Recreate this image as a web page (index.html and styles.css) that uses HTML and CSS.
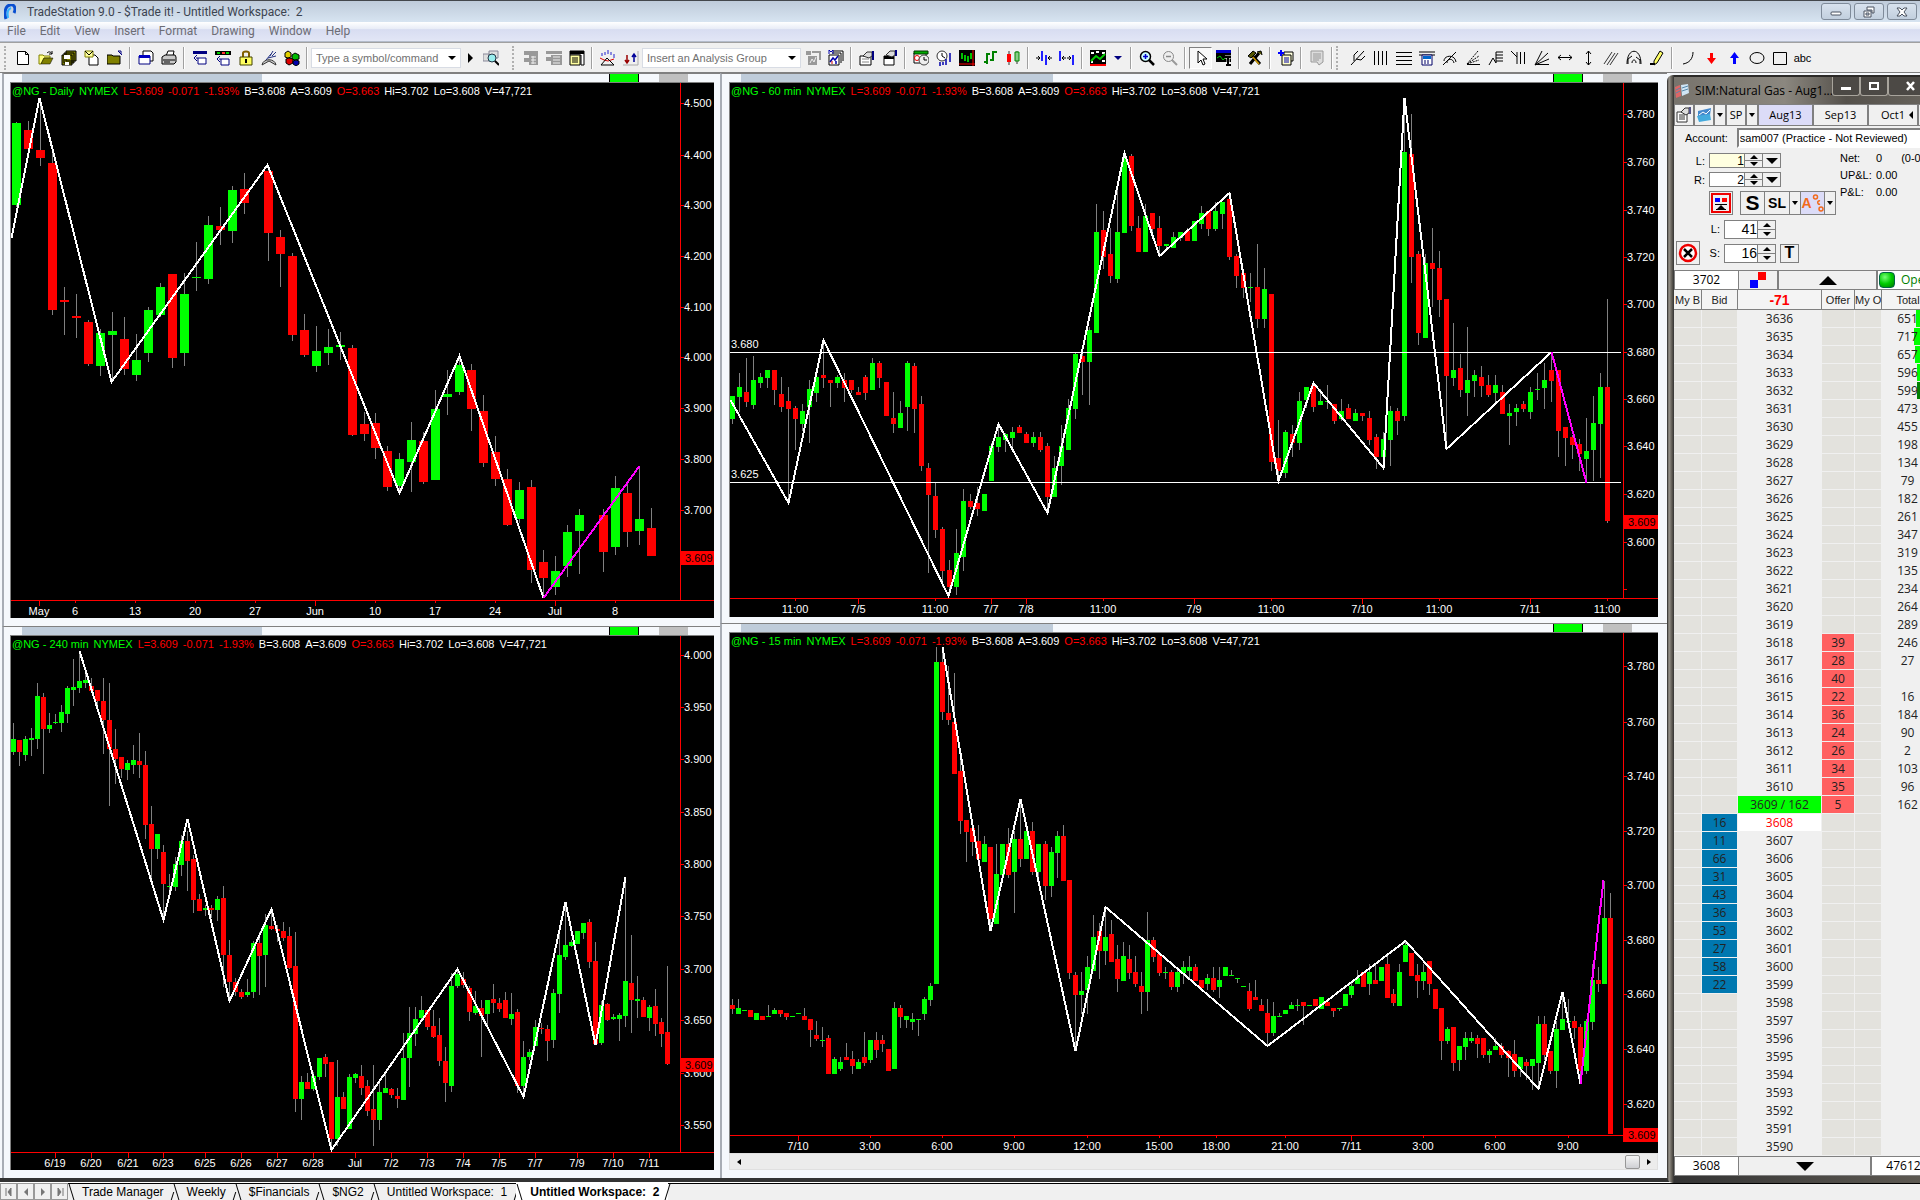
FILE: index.html
```html
<!DOCTYPE html>
<html lang="en">
<head>
    <meta charset="UTF-8">
    <meta name="viewport" content="width=device-width, initial-scale=1.0">
    <title>TradeStation 9.0 - $Trade it! - Untitled Workspace: 2</title>
    <link rel="stylesheet" href="styles.css">
</head>
<body>
    <header class="titlebar">
        <svg class="logo" viewBox="0 0 12 16"><path d="M2 15C0 9 1 2 6 1c5-1 6 4 4 8" fill="none" stroke="#0a4fd0" stroke-width="3"/><path d="M4 14C3 9 4 5 7 4" fill="none" stroke="#35b4ff" stroke-width="2"/></svg>
        <h1>TradeStation 9.0 - $Trade it! - Untitled Workspace: &nbsp;2</h1>
        <div class="window-buttons">
            <button aria-label="Minimize"><svg viewBox="0 0 12 12"><rect x="1" y="6" width="10" height="3" rx="1"/></svg></button>
            <button aria-label="Restore"><svg viewBox="0 0 12 12"><path d="M4 1h7v6H9V4H4zM1 5h7v6H1zM3 7v2h3V7z"/></svg></button>
            <button aria-label="Close"><svg viewBox="0 0 12 12"><path d="M1 2h3l2 2 2-2h3L8 6l3 4H8L6 8l-2 2H1l3-4z"/></svg></button>
        </div>
    </header>

    <nav class="menu">
        <a href="#">File</a>
        <a href="#">Edit</a>
        <a href="#">View</a>
        <a href="#">Insert</a>
        <a href="#">Format</a>
        <a href="#">Drawing</a>
        <a href="#">Window</a>
        <a href="#">Help</a>
    </nav>

    <div class="toolbar">
        <span class="grip"></span>
        <button title="New"><svg viewBox="0 0 16 16"><path d="M2.500 1.500h8l3 3v10h-11zM10.500 1.500v3h3" fill="#fff" stroke="#000"/></svg></button>
        <button title="Open"><svg viewBox="0 0 16 16"><path d="M1 14V5h4l1 1h6v2H6l-3 6z" fill="#ffff80" stroke="#808000"/><path d="M3 14l3-6h9l-3 6z" fill="#808000" stroke="#000" stroke-width=".5"/><path d="M9 3c2-2 4-1 5 1M14 1v3h-3" fill="none" stroke="#000"/></svg></button>
        <button title="Save all"><svg viewBox="0 0 16 16"><path d="M5 1h10v10H5zM3 3h10v10H3zM1 5h10v10H1z" fill="#808000" stroke="#000"/><path d="M3 5h6v4H3zM4 12h4v3H4z" fill="#fff"/></svg></button>
        <button title="Send"><svg viewBox="0 0 16 16"><path d="M5 5h6l3 3v7H5z" fill="#fff" stroke="#000"/><path d="M1 1h8v6H1z" fill="#ffffa0" stroke="#808000"/><path d="M1 1l4 4 4-4" fill="none" stroke="#000"/></svg></button>
        <button title="Close workspace"><svg viewBox="0 0 16 16"><path d="M0 14V5h5l1 1h7v8z" fill="#808000" stroke="#000"/><path d="M11 1h3v3M11 1l4 4" fill="none" stroke="#000080"/></svg></button>
        <span class="sep"></span>
        <button title="Preview"><svg viewBox="0 0 16 16"><path d="M5 1h8l2 2v8H5z" fill="#fff" stroke="#000"/><path d="M1 6h11v8H1z" fill="#fff" stroke="#000080"/><path d="M1 5h11v3H1z" fill="#0000c0"/></svg></button>
        <button title="Print"><svg viewBox="0 0 16 16"><path d="M5 6l2-5h6l-1 5z" fill="#fff" stroke="#000"/><path d="M1 7l3-2h10l1 2v5l-2 2H1z" fill="#c8c8c8" stroke="#000"/><path d="M2 10h12M3 12h6" stroke="#000"/></svg></button>
        <span class="sep"></span>
        <button title="Data window"><svg viewBox="0 0 16 16"><path d="M1 1h14v3H1z" fill="#000080"/><path d="M4 8h10v6H6V8" fill="#fff" stroke="#000080"/><path d="M5 5L2 8l3 3" fill="none" stroke="#000080"/></svg></button>
        <button title="Status"><svg viewBox="0 0 16 16"><path d="M0 1h16v4H0z" fill="#000"/><path d="M2 2h3v2H2z" fill="#0c0"/><path d="M7 2h3v2H7z" fill="#f33"/><path d="M11 2h3v2h-3z" fill="#0c0"/><path d="M4 9h10v6H6V9" fill="#fff" stroke="#000080"/><path d="M5 6L2 9l3 3" fill="none" stroke="#000080"/></svg></button>
        <button title="Lock"><svg viewBox="0 0 16 16"><path d="M5 7V3c0-2 6-2 6 0v4" fill="none" stroke="#806000" stroke-width="2"/><path d="M2 7h12v8H2z" fill="#ffff60" stroke="#404000"/><path d="M7 9h2v4H7z"/></svg></button>
        <button title="Satellite"><svg viewBox="0 0 16 16"><path d="M1 15c1-7 13-7 14 0l-7-4z" fill="#ccc" stroke="#333"/><path d="M5 10l5-6M9 6l3-5M11 6l4-4M7 8l8-2" fill="none" stroke="#203080"/></svg></button>
        <button title="Blocks"><svg viewBox="0 0 16 16"><path d="M1 3l3-2 3 2v4L4 8 1 7z" fill="#e0d000" stroke="#000"/><path d="M8 5l3-2 4 2v4l-4 1-3-1z" fill="#0b0" stroke="#000"/><path d="M2 9l3-1 4 1v4l-4 2-3-2z" fill="#d00" stroke="#000"/><path d="M9 11l3-1 3 1v3l-3 2-3-2z" fill="#00a" stroke="#000"/></svg></button>
        <span class="sep"></span>
        <div class="combo">
            <input type="text" placeholder="Type a symbol/command" aria-label="Symbol or command">
            <button aria-label="History"><i class="caret"></i></button>
        </div>
        <button class="go" title="Go"><svg viewBox="0 0 8 16"><path d="M2 3l5 5-5 5z"/></svg></button>
        <button title="Symbol lookup"><svg viewBox="0 0 16 16"><path d="M0 4h6v7H0zM6 1h9v7H6z" fill="#ddd" stroke="#889"/><circle cx="9" cy="8" r="4" fill="#9ee" stroke="#234"/><path d="M12 11l4 4" stroke="#000" stroke-width="2"/></svg></button>
        <span class="grip wide"></span>
        <button title="Price"><svg viewBox="0 0 16 16"><path d="M1 1h14v4H1zM6 5h9v10H6zM1 8h5v4H1z" fill="#999"/><path d="M8 7h5M8 10h5M8 13h5M10 6v8" stroke="#eee"/></svg></button>
        <button title="Quote"><svg viewBox="0 0 16 16"><path d="M0 1h16v3H0zM5 5h11v10H5zM0 7h5v4H0z" fill="#999"/><path d="M7 7h7M7 10h7M7 13h7" stroke="#eee"/></svg></button>
        <button title="Table"><svg viewBox="0 0 16 16"><path d="M1 1h14v14h-3V5H1z" fill="#fff" stroke="#000"/><path d="M1 1h14v3H1z"/><path d="M1 5h10v10H1z" fill="#ffffa0" stroke="#000"/><path d="M3 8h6M3 10h6M3 12h6" stroke="#000"/></svg></button>
        <span class="sep"></span>
        <button title="Indicator"><svg viewBox="0 0 16 16"><path d="M2 6V3M5 5V2M8 4V0M11 5V2M14 8V4" stroke="#22c" fill="none"/><path d="M0 8l4 2 4 1 6-2" stroke="#d00" fill="none"/><path d="M1 15l6-7 7 7z" fill="none" stroke="#000"/></svg></button>
        <button title="Strategy"><svg viewBox="0 0 16 16"><path d="M0 15h15M15 1v14" stroke="#aaa"/><path d="M4 5v7M2 10l2 3 2-3" fill="none" stroke="#900" stroke-width="1.500"/><path d="M11 12V5M9 7l2-3 2 3" fill="none" stroke="#009" stroke-width="1.500"/></svg></button>
        <div class="combo group">
            <input type="text" placeholder="Insert an Analysis Group" aria-label="Analysis group">
            <button aria-label="Groups"><i class="caret"></i></button>
        </div>
        <button title="Save group"><svg viewBox="0 0 16 16"><path d="M1 1h5v4H1zM7 1h9v9h-2V3H7zM3 6h9v9H3z" fill="#999"/><path d="M5 13l2-4 2 3 2-5" fill="none" stroke="#eee"/></svg></button>
        <button title="Manage groups"><svg viewBox="0 0 16 16"><path d="M5 1h10v10M4 3h9v10" fill="#fff" stroke="#000"/><path d="M1 5h10v10H1z" fill="#fff" stroke="#000"/><path d="M2 12l3-4 2 2 3-4M8 14v-3" fill="none" stroke="#00a" stroke-width="1.500"/><path d="M1 4V0l2 2 2-2v4" fill="none" stroke="#00a"/><path d="M4 14v-3" stroke="#c00"/></svg></button>
        <span class="sep"></span>
        <button title="Format symbol"><svg viewBox="0 0 16 16"><path d="M1 6h11v9H1z" fill="#fff" stroke="#000"/><path d="M3 9h7M3 12h7" stroke="#888"/><path d="M4 6l4-4h5v4l-3 2z" fill="#ddd" stroke="#333"/><path d="M13 1h2v9h-2z" fill="#000080"/></svg></button>
        <button title="Format window"><svg viewBox="0 0 16 16"><path d="M2 6h10v9H2z" fill="#fff" stroke="#000"/><path d="M2 6h10v3H2z"/><path d="M4 5l4-4h5v4l-3 2z" fill="#ddd" stroke="#333"/><path d="M13 0h2v6h-2z" fill="#000080"/></svg></button>
        <span class="sep"></span>
        <button title="Sessions"><svg viewBox="0 0 16 16"><path d="M1 3h12v10H1z" fill="#fff" stroke="#000"/><path d="M1 1h14v3H1z" fill="#0a0" stroke="#030"/><circle cx="4" cy="8" r="2.500" fill="none" stroke="#e00"/><circle cx="11" cy="10" r="5" fill="#eee" stroke="#444"/><path d="M11 7v3h3" fill="none" stroke="#000"/></svg></button>
        <button title="Interval"><svg viewBox="0 0 16 16"><circle cx="6" cy="6" r="5" fill="#fff" stroke="#333"/><path d="M6 3v3l3 2" fill="none" stroke="#000"/><path d="M4 12v4M7 12v3M10 9v6M14 3v9" stroke="#00a" stroke-width="1.500"/></svg></button>
        <button title="Chart style"><svg viewBox="0 0 16 16"><path d="M0 0h16v16H0z"/><path d="M3 3v6M6 5v6M9 6v6M12 3v6" stroke="#0f0" stroke-width="1.500"/><path d="M0 14h16M14 0v16" stroke="#f00"/></svg></button>
        <button title="OHLC bars"><svg viewBox="0 0 16 16"><path d="M5 3v11M2 12h3M5 4h3M11 1v10M8 10h3M11 2h4" stroke="#008000" stroke-width="2"/></svg></button>
        <button title="Candlesticks"><svg viewBox="0 0 16 16"><path d="M4 1v14M12 1v13" stroke="#333"/><path d="M2 4h4v8H2z" fill="#f00"/><path d="M10 2h4v9h-4z" fill="#8c8" stroke="#080"/></svg></button>
        <span class="sep"></span>
        <button title="Less spacing"><svg viewBox="0 0 16 16"><path d="M6 1v10M10 5v10" stroke="#22f" stroke-width="2"/><path d="M0 8h4M2 6l2 2-2 2M16 8h-4M14 6l-2 2 2 2" fill="none" stroke="#000"/></svg></button>
        <button title="More spacing"><svg viewBox="0 0 16 16"><path d="M1 1v10M14 5v10" stroke="#22f" stroke-width="2"/><path d="M3 8h4M5 6L3 8l2 2M12 8H8M10 6l2 2-2 2" fill="none" stroke="#000"/></svg></button>
        <span class="sep"></span>
        <button title="Chart colors"><svg viewBox="0 0 16 16"><path d="M0 0h16v16H0z"/><path d="M1 2h3v2H1zM6 1h3v2H6zM12 2h3v2h-3zM1 11h2v2H1zM12 10h3v2h-3z" fill="#fff"/><path d="M1 11l5-5 4 3 5-5" fill="none" stroke="#0c0" stroke-width="2"/><path d="M0 14h16v2H0z" fill="#f00"/></svg></button>
        <button class="go" title="More colors"><i class="caret blue"></i></button>
        <span class="sep"></span>
        <button title="Zoom in"><svg viewBox="0 0 16 16"><circle cx="6.500" cy="6.500" r="5" fill="#cff" stroke="#000" stroke-width="1.500"/><path d="M4 6.500h5M6.500 4v5" stroke="#00c" stroke-width="1.500"/><path d="M10 10l5 5" stroke="#000" stroke-width="2.500"/></svg></button>
        <button title="Zoom out"><svg viewBox="0 0 16 16"><circle cx="6.500" cy="6.500" r="5" fill="#eee" stroke="#888"/><path d="M4 6.500h5" stroke="#888" stroke-width="1.500"/><path d="M10 10l5 5" stroke="#999" stroke-width="2"/></svg></button>
        <span class="sep"></span>
        <button class="pressed" title="Pointer"><svg viewBox="0 0 16 16"><path d="M5 1v12l3-3 2 5 2-1-2-5h4z" fill="#fff" stroke="#000"/></svg></button>
        <button title="Text"><svg viewBox="0 0 16 16"><path d="M0 1h15v11H0z"/><path d="M0 0h15v3H0z" fill="#00c"/><path d="M1 8l3-2 3 4 2-2" fill="none" stroke="#0c0"/><path d="M9 7h6M12 7v8M10 15h5" stroke="#fff" stroke-width="3"/><path d="M9 7h6M12 7v8M10 15h5" stroke="#000" stroke-width="2"/></svg></button>
        <span class="sep"></span>
        <button title="Tools"><svg viewBox="0 0 16 16"><path d="M3 14l9-11M4 4l9 10" stroke="#000" stroke-width="3"/><path d="M4 5l8 9" stroke="#c90" stroke-width="1.500"/><path d="M1 6l5-5 3 2-5 5zM10 2l4-1 1 4" fill="#550" stroke="#000"/></svg></button>
        <span class="sep"></span>
        <button title="Add panel"><svg viewBox="0 0 16 16"><path d="M6 2h9v9H6z" fill="#ffd" stroke="#000"/><path d="M4 5h9v10H4z" fill="#ffc" stroke="#000"/><path d="M6 8h5M6 10h5M6 12h5" stroke="#00a"/><path d="M0 3h6M3 0v6" stroke="#00f" stroke-width="2"/></svg></button>
        <span class="sep"></span>
        <button title="Notes"><svg viewBox="0 0 16 16"><path d="M2 1h12v11l-4 3-2-3H2z" fill="#ddd" stroke="#999"/><path d="M4 4h8M4 6h8M4 8h8M4 10h6" stroke="#999"/></svg></button>
        <span class="sep"></span>
        <span class="grip"></span>
        <div class="drawing-tools">
            <button title="Andrews pitchfork"><svg viewBox="0 0 16 16"><path d="M1 15L14 1M4 11V5l4-4M6 9l5 1 4-4" fill="none" stroke="#000"/></svg></button>
            <button title="Time lines"><svg viewBox="0 0 16 16"><path d="M1.500 1v14M5.500 1v14M9.500 1v14M13.500 1v14" stroke="#000"/></svg></button>
            <button title="Price lines"><svg viewBox="0 0 16 16"><path d="M0 2.500h16M0 6.500h16M0 10.500h16M0 14.500h16" stroke="#000"/></svg></button>
            <button title="Calculator"><svg viewBox="0 0 16 16"><path d="M0 2h16M0 5h16" stroke="#000"/><path d="M3 5h10v10H3z" fill="#fff" stroke="#006"/><path d="M4 6h8v3H4z" fill="#06c"/><path d="M5 11h6M5 13h6" stroke="#006" stroke-dasharray="2 1"/></svg></button>
            <button title="Speed arcs"><svg viewBox="0 0 16 16"><path d="M1 15L14 2M2 11c0-6 11-7 12 1M5 13c0-5 6-5 7 0" fill="none" stroke="#000"/></svg></button>
            <button title="Speed lines"><svg viewBox="0 0 16 16"><path d="M2 14L13 1M2 14l12-8M2 14l12-4" fill="none" stroke="#000" stroke-dasharray="2 1"/><path d="M2 14.500h13" stroke="#000"/></svg></button>
            <button title="Retracement"><svg viewBox="0 0 16 16"><path d="M1 15l4-7 3 5V2h7M8 5h7M8 8h7M8 11h7" fill="none" stroke="#000"/></svg></button>
            <button title="Time extension"><svg viewBox="0 0 16 16"><path d="M0 1l6 6M6 2v12M9.500 2v12M13.500 2v12" fill="none" stroke="#000"/></svg></button>
            <button title="Gann fan"><svg viewBox="0 0 16 16"><path d="M1 15L8 1M1 15L14 3M1 15l14-6M1 14.500h14" fill="none" stroke="#000"/></svg></button>
            <button title="Horizontal line"><svg viewBox="0 0 16 16"><path d="M1 7.500h14M4 5L1 7.500 4 10M12 5l3 2.500L12 10" fill="none" stroke="#000"/></svg></button>
            <button title="Vertical line"><svg viewBox="0 0 16 16"><path d="M8.500 1v14M6 4l2.500-3L11 4M6 12l2.500 3L11 12" fill="none" stroke="#000"/></svg></button>
            <button title="Parallel lines"><svg viewBox="0 0 16 16"><path d="M1 14L9 2M4 15l8-12M7 15l8-12" stroke="#333"/></svg></button>
            <button title="Cycles"><svg viewBox="0 0 16 16"><path d="M1 14c0-17 14-17 14 0M2 14V9l4-3M6 13c0-4 4-4 4 0M10 7l4 3v4" fill="none" stroke="#000"/></svg></button>
            <button title="Pencil"><svg viewBox="0 0 16 16"><path d="M5 11L11 1l3 2-6 10-3 2z" fill="#ff6" stroke="#000"/><path d="M1 14h5" stroke="#000" stroke-width="2"/></svg></button>
            <span class="sep"></span>
            <button title="Arc"><svg viewBox="0 0 16 16"><path d="M13 2c0 7-4 11-10 12" fill="none" stroke="#000"/></svg></button>
            <button title="Down arrow"><svg viewBox="0 0 16 16"><path d="M7 3h3v5h3l-4.500 6L4 8h3z" fill="#f00"/></svg></button>
            <button title="Up arrow"><svg viewBox="0 0 16 16"><path d="M7 14h3V8h3L8.500 2 4 8h3z" fill="#00f"/></svg></button>
            <button title="Ellipse"><svg viewBox="0 0 16 16"><ellipse cx="8" cy="8" rx="7" ry="5.500" fill="none" stroke="#000"/></svg></button>
            <button title="Rectangle"><svg viewBox="0 0 16 16"><path d="M1.500 2.500h13v12h-13z" fill="none" stroke="#000"/></svg></button>
            <button title="Text label">abc</button>
        </div>
    </div>

    <main class="workspace">
        <div class="column left">
            <section class="chart-window">
                <div class="strip"><i class="band"></i><i class="up"></i><i class="idle"></i></div>
                <div class="chart" id="chart-daily"></div>
            </section>
            <section class="chart-window">
                <div class="strip"><i class="band"></i><i class="up"></i><i class="idle"></i></div>
                <div class="chart" id="chart-240"></div>
            </section>
        </div>
        <div class="column right">
            <section class="chart-window">
                <div class="strip"><i class="band"></i><i class="up"></i><i class="idle"></i></div>
                <div class="chart" id="chart-60"></div>
            </section>
            <section class="chart-window scrolls">
                <div class="strip"><i class="band"></i><i class="up"></i><i class="idle"></i></div>
                <div class="chart" id="chart-15"></div>
                <div class="scrollbar">
                    <button aria-label="Scroll left"><svg viewBox="0 0 8 8"><path d="M6 1v6L2 4z"/></svg></button>
                    <span class="thumb"></span>
                    <button aria-label="Scroll right"><svg viewBox="0 0 8 8"><path d="M2 1v6l4-3z"/></svg></button>
                </div>
            </section>
        </div>

        <aside class="matrix">
            <div class="matrix-title">
                <svg viewBox="0 0 16 16"><path d="M1 4l5-2 1 11-5 2z" fill="#d66"/><path d="M7 2l7-1 1 9-7 3z" fill="#cfe4f4"/><path d="M8 5l6-2M8 8l6-2M2 7l4-2M2 10l4-2" stroke="#58a"/></svg>
                <h2>SIM:Natural Gas - Aug1...</h2>
                <div class="matrix-buttons">
                    <button aria-label="Minimize"><svg viewBox="0 0 12 12"><path d="M1 7h10v3H1z" fill="#fff"/></svg></button>
                    <button aria-label="Maximize"><svg viewBox="0 0 12 12"><path d="M2 3h8v6H2z" fill="none" stroke="#fff" stroke-width="2"/></svg></button>
                    <button class="close" aria-label="Close"><svg viewBox="0 0 12 12"><path d="M2 2l7 8M9 2l-7 8" stroke="#fff" stroke-width="2.500"/></svg></button>
                </div>
            </div>

            <div class="matrix-body">
                <div class="contracts">
                    <button class="icon" aria-label="Properties"><svg viewBox="0 0 16 16"><path d="M1 5h10v10H1z" fill="#fff" stroke="#333"/><path d="M3 8h6M3 10h6M3 12h6" stroke="#333"/><path d="M5 5l4-4h4v5l-3 2z" fill="#ddd" stroke="#333"/><path d="M13 0h2v7h-2z" fill="#558"/></svg></button>
                    <button class="icon" aria-label="Symbol"><svg viewBox="0 0 16 16"><path d="M2 4l13-3-1 7-12 2z" fill="#48c"/><path d="M1 9l13-2 1 6-12 2z" fill="#4ad"/><path d="M3 8l4-3 3 2 4-4" fill="none" stroke="#fff"/></svg></button>
                    <button class="drop" aria-label="Symbol list"><i class="caret"></i></button>
                    <button class="sp">SP</button>
                    <button class="drop" aria-label="Spread list"><i class="caret"></i></button>
                    <button class="month active">Aug13</button>
                    <button class="month">Sep13</button>
                    <button class="month cut">Oct1</button>
                    <button class="back" aria-label="Previous months"><svg viewBox="0 0 8 8"><path d="M6 0v8L2 4z"/></svg></button>
                </div>

                <div class="account">
                    <label for="account">Account:</label>
                    <select id="account"><option>sam007 (Practice - Not Reviewed)</option></select>
                </div>

                <div class="order">
                    <div class="entry">
                        <div class="field small">
                            <label for="qty-l">L:</label><input id="qty-l" class="cream" type="text" value="1">
                            <span class="spin"><button aria-label="Up"></button><button aria-label="Down"></button></span>
                            <button class="pick" aria-label="Sizes"></button>
                        </div>
                        <div class="field small">
                            <label for="qty-r">R:</label><input id="qty-r" type="text" value="2">
                            <span class="spin"><button aria-label="Up"></button><button aria-label="Down"></button></span>
                            <button class="pick" aria-label="Sizes"></button>
                        </div>
                        <div class="modes">
                            <button class="center" aria-label="Center ladder"><svg viewBox="0 0 20 20"><path d="M1 1h18v18H1z" fill="#eee" stroke="#e00" stroke-width="2"/><path d="M4 5h5v4H4z" fill="#00f"/><path d="M11 5h5v4h-5z" fill="#f00"/><path d="M4 11.500h12M5 16.500h10" stroke="#000"/><path d="M6 16l4-4 4 4z" fill="#000"/></svg></button>
                            <button class="s">S</button><button class="sl">SL</button><button class="drop" aria-label="Stop types"><i class="caret"></i></button><button class="oco">A<svg viewBox="0 0 12 20"><g fill="none" stroke="#f26a1b" stroke-width="1.500"><circle cx="3.500" cy="4" r="2"/><path d="M8 8c-3-1-3 4 0 3"/><circle cx="9" cy="16" r="2"/></g></svg></button><button class="drop" aria-label="OCO types"><i class="caret"></i></button>
                        </div>
                        <div class="field large">
                            <label for="limit">L:</label><input id="limit" type="text" value="41">
                            <span class="spin"><button aria-label="Up"></button><button aria-label="Down"></button></span>
                        </div>
                        <div class="field large">
                            <button class="cancel" aria-label="Cancel all"><svg viewBox="0 0 20 20"><circle cx="10" cy="10" r="8" fill="#fff" stroke="#e00" stroke-width="2.500"/><path d="M6 6l8 8M14 6l-8 8" stroke="#000" stroke-width="2.500"/></svg></button>
                            <label for="stop">S:</label><input id="stop" type="text" value="16">
                            <span class="spin"><button aria-label="Up"></button><button aria-label="Down"></button></span>
                            <button class="trail">T</button>
                        </div>
                    </div>
                    <dl class="position">
                        <dt>Net:</dt><dd>0<span>(0-0)</span></dd>
                        <dt>UP&amp;L:</dt><dd>0.00</dd>
                        <dt>P&amp;L:</dt><dd>0.00</dd>
                    </dl>
                </div>

                <div class="ladder-nav">
                    <output>3702</output>
                    <button class="squares" aria-label="Recenter"><svg viewBox="0 0 16 16"><path d="M8 0h8v8H8z" fill="#f00"/><path d="M0 8h8v8H0z" fill="#00f"/></svg></button>
                    <button class="scroll-up" aria-label="Scroll up"><svg viewBox="0 0 18 9"><path d="M0 9l9-9 9 9z"/></svg></button>
                    <span class="market"><i></i>Open</span>
                </div>
                <table class="ladder">
                    <thead><tr><th>My B</th><th>Bid</th><th class="net">-71</th><th>Offer</th><th>My O</th><th>Total</th></tr></thead>
                    <tbody id="ladder-rows"></tbody>
                </table>
                <div class="ladder-nav">
                    <output>3608</output>
                    <button class="scroll-down" aria-label="Scroll down"><svg viewBox="0 0 18 9"><path d="M0 0h18L9 9z"/></svg></button>
                    <output class="sum">47612</output>
                </div>
            </div>
        </aside>
    </main>

    <footer class="tabs">
        <div class="tab-nav">
            <button aria-label="First"><svg viewBox="0 0 8 8"><path d="M1 0v8M6 0v8L3 4z" stroke="#777" fill="#777"/></svg></button>
            <button aria-label="Previous"><svg viewBox="0 0 8 8"><path d="M6 0v8L2 4z" fill="#777"/></svg></button>
            <button aria-label="Next"><svg viewBox="0 0 8 8"><path d="M2 0v8l4-4z" fill="#777"/></svg></button>
            <button aria-label="Last"><svg viewBox="0 0 8 8"><path d="M2 0v8l3-4zM7 0v8" stroke="#777" fill="#777"/></svg></button>
        </div>
        <a href="#">Trade Manager</a>
        <a href="#">Weekly</a>
        <a href="#">$Financials</a>
        <a href="#">$NG2</a>
        <a href="#">Untitled Workspace: &nbsp;1</a>
        <a href="#" class="active">Untitled Workspace: &nbsp;2</a>
        <span class="rest"></span>
    </footer>

    <script src="app.js"></script>
</body>
</html>
```
FILE: styles.css
```css
:root {
    --face: #f0f0f0;
    --frame: #f5f8fc;
    --line: #808080;
    --band: #bfccda;
    --up: #00ff00;
    --down: #ff0000;
}

* {
    margin: 0;
    padding: 0;
    box-sizing: border-box;
}

body {
    display: flex;
    flex-direction: column;
    min-height: 100vh;
    overflow: hidden;
    background: var(--face);
    color: #000;
    font: 11px/14px "Liberation Sans", Arial, sans-serif;
}

button {
    border: 0;
    background: none;
    color: inherit;
    font: inherit;
}

svg {
    display: block;
}

.caret {
    display: block;
    border: 4px solid transparent;
    border-top-color: #000;
    border-bottom: 0;
}

.caret.blue {
    border-top-color: #000080;
}

/* title bar and menu */

.titlebar {
    display: flex;
    align-items: center;
    height: 22px;
    padding: 0 3px 0 4px;
    border-top: 1px solid #44474c;
    background: linear-gradient(#bfcbda, #d7e4f1);
}

.logo {
    width: 12px;
    height: 16px;
}

h1 {
    flex: 1;
    margin-left: 11px;
    color: #3c4450;
    font: 12px/20px Roboto, sans-serif;
}

.window-buttons {
    display: flex;
    gap: 3px;
}

.window-buttons button {
    display: grid;
    place-items: center;
    width: 30px;
    height: 17px;
    border: 1px solid #7f8b9a;
    border-radius: 3px;
    background: linear-gradient(#d8e2ee, #c2cfde);
}

.window-buttons svg {
    width: 12px;
    height: 12px;
    fill: #fff;
    stroke: #4a5260;
}

.menu {
    display: flex;
    gap: 14px;
    height: 20px;
    padding-left: 7px;
    border-bottom: 1px solid #b4bccb;
    background: linear-gradient(#ffffff, #e9edf7 35%, #d8ddf1 40%, #e2e6f6);
}

.menu a {
    color: #6d6d75;
    font: 12px/19px Roboto, sans-serif;
    text-decoration: none;
}

/* toolbar */

.toolbar {
    display: flex;
    align-items: center;
    height: 31px;
    padding-left: 4px;
    border-top: 1px solid #a0a0a0;
    border-bottom: 1px solid var(--line);
    background: var(--face);
}

.toolbar button {
    display: grid;
    flex: none;
    place-items: center;
    width: 23px;
    height: 22px;
}

.toolbar svg {
    width: 16px;
    height: 16px;
}

.toolbar button.go {
    width: 18px;
}

.toolbar .go svg {
    width: 8px;
}

.toolbar .pressed {
    border: 1px solid;
    border-color: #808080 #fff #fff #808080;
    background: #f8f8f8;
}

.grip {
    flex: none;
    width: 3px;
    height: 24px;
    margin-right: 4px;
    border-left: 2px dotted #b0b0b0;
}

.grip.wide {
    margin-left: 10px;
}

.sep {
    flex: none;
    width: 2px;
    height: 22px;
    margin: 0 3px;
    border-left: 1px solid #a0a0a0;
    border-right: 1px solid #fff;
}

.combo {
    display: flex;
    flex: none;
    width: 150px;
    height: 20px;
    border: 1px solid #d8dce4;
    background: #fff;
}

.combo.group {
    width: 159px;
}

.combo input {
    flex: 1;
    min-width: 0;
    padding-left: 4px;
    border: 0;
    background: none;
    font: inherit;
}

.combo input::placeholder {
    color: #707070;
}

.toolbar .combo button {
    width: 16px;
    height: 18px;
}

.drawing-tools {
    display: flex;
    align-items: center;
    margin-left: 3px;
}

/* chart windows */

.workspace {
    display: flex;
    flex: 1;
    border-bottom: 1px solid #fff;
    background: linear-gradient(var(--frame), var(--frame)) 0 0 / 100% calc(100% - 4px) no-repeat #333;
}

.column {
    display: grid;
    min-width: 0;
    margin-bottom: 4px;
}

.left {
    flex: 718;
    grid-template-rows: 1fr 1fr;
    margin-left: 2px;
}

.right {
    flex: 947;
    grid-template-rows: 550fr 556fr;
}

.chart-window {
    display: flex;
    flex-direction: column;
    min-height: 0;
    padding: 0 6px 8px;
    border-top: 1px solid var(--line);
    border-left: 2px solid #a8adb5;
    background: var(--frame);
}

.right .chart-window {
    padding: 0 9px 6px 7px;
}

.right .scrolls {
    padding-bottom: 8px;
}

.strip {
    display: flex;
    height: 8px;
    padding: 0 26px 0 12px;
}

.strip .band {
    width: 36%;
    margin-right: auto;
    background: var(--band);
}

.right .band {
    width: 35%;
}

.strip .up {
    width: 30px;
    margin-right: 20px;
    border: solid #000;
    border-width: 0 1px;
    background: var(--up);
}

.strip .idle {
    width: 29px;
    background: #c0c0c0;
}

.chart {
    position: relative;
    flex: 1;
    min-height: 0;
    border-top: 1px solid var(--line);
    border-left: 1px solid var(--line);
    background: #000;
}

.chart svg {
    position: absolute;
    inset: 0;
    width: 100%;
    height: 100%;
    shape-rendering: crispEdges;
}

.chart text {
    fill: #fff;
    font: 11px "Liberation Sans", Arial, sans-serif;
}

.chart text.last {
    fill: #000;
}

.chart .x {
    text-anchor: middle;
}

.axis {
    fill: none;
    stroke: var(--down);
}

.zigzag {
    fill: none;
    stroke: #fff;
    stroke-width: 2;
}

.zigzag.open {
    stroke: #ff00ff;
}

.quote {
    position: relative;
    display: flex;
    gap: 5px;
    padding: 1px;
    color: #fff;
    white-space: nowrap;
}

.quote .symbol {
    color: var(--up);
}

.quote .neg {
    color: var(--down);
}

.scrollbar {
    display: flex;
    align-items: center;
    height: 17px;
    border: 1px solid #e0e0e0;
    background: #ececec;
}

.scrollbar button {
    width: 17px;
}

.scrollbar svg {
    width: 8px;
    height: 8px;
    margin: 0 auto;
}

.scrollbar .thumb {
    width: 15px;
    height: 14px;
    margin-left: auto;
    border: 1px solid #979797;
    border-radius: 2px;
    background: linear-gradient(#f5f5f5, #cfd0d4);
}

/* order matrix */

.matrix {
    position: relative;
    flex: none;
    width: 253px;
    margin: 2px 0 -1px;
    overflow: hidden;
    padding: 0 0 6px 7px;
    border-radius: 6px 0 0 6px;
    background: linear-gradient(90deg, #222 0, #9a968e 2px, #5d5952 5px, #333 7px, #5d5952 100%);
}

.matrix-title {
    display: flex;
    align-items: center;
    height: 29px;
    border-top: 2px solid #2c2a28;
    background: linear-gradient(90deg, #77736c, #8b877f 45%, #55514b 70%, #66625b);
}

.matrix-title > svg {
    flex: none;
    width: 16px;
    height: 16px;
}

.matrix h2 {
    flex: none;
    width: 137px;
    margin-left: 5px;
    font: 12px/20px "Open Sans", sans-serif;
    white-space: nowrap;
}

.matrix-buttons {
    display: flex;
    align-self: flex-start;
}

.matrix-buttons button {
    display: grid;
    flex: none;
    place-items: center;
    width: 28px;
    height: 19px;
    border: 1px solid #a8a49c;
    border-top: 0;
    border-radius: 0 0 3px 3px;
    background: #4c4945;
}

.matrix-buttons .close {
    width: 46px;
}

.matrix-buttons svg {
    width: 12px;
    height: 12px;
}

.matrix-body {
    width: 280px;
    background: var(--face);
}

.contracts {
    display: flex;
    height: 22px;
    border: 1px solid var(--line);
}

.contracts button {
    display: grid;
    flex: none;
    place-items: center;
    border-right: 2px solid var(--line);
    font: 11px/18px "Open Sans", sans-serif;
}

.contracts .icon {
    width: 20px;
}

.contracts svg {
    width: 16px;
    height: 16px;
}

.contracts .drop {
    width: 12px;
}

.contracts .sp {
    width: 20px;
}

.contracts .month {
    width: 55px;
}

.contracts .month.active {
    background: #dcdcf8;
}

.contracts .month.cut {
    width: 36px;
    padding-left: 12px;
    border-right: 0;
}

.contracts .back {
    width: 14px;
}

.contracts .back svg {
    width: 8px;
    height: 8px;
}

.drop .caret {
    border-width: 4px 3px 0;
}

.account {
    display: flex;
    align-items: center;
    gap: 9px;
    height: 24px;
    padding-left: 11px;
}

.account select {
    width: 200px;
    height: 20px;
    padding-left: 1px;
    border: 2px solid var(--line);
    border-right: 0;
    border-bottom-color: #fff;
    border-radius: 0;
    appearance: none;
    background: #fff;
    font: inherit;
}

.order {
    display: flex;
    height: 120px;
}

.entry {
    width: 165px;
    padding-top: 3px;
}

.field {
    display: flex;
    align-items: center;
    margin-bottom: 4px;
}

.field label {
    width: 31px;
    margin-right: 4px;
    text-align: right;
}

.field input {
    width: 36px;
    height: 15px;
    border: 1px solid var(--line);
    background: #fff;
    font: 12px/13px "Liberation Sans", Arial, sans-serif;
    text-align: right;
}

.field .cream {
    background: #ffffe0;
}

.spin {
    display: flex;
    flex-direction: column;
    width: 18px;
    height: 15px;
    border: 1px solid var(--line);
    border-left: 0;
}

.spin button {
    flex: 1;
}

.spin button + button {
    border-top: 1px solid var(--line);
}

.spin button::before,
.pick::before {
    content: "";
    display: block;
    width: 0;
    margin: 0 auto;
    border: 4px solid transparent;
    border-bottom-color: #000;
    border-top: 0;
}

.spin button + button::before {
    border-top: 4px solid #000;
    border-bottom: 0;
}

.pick {
    width: 18px;
    height: 15px;
    border: 1px solid var(--line);
    border-left: 0;
}

.pick::before {
    border: 6px solid transparent;
    border-top-color: #000;
    border-bottom: 0;
}

.modes {
    display: flex;
    height: 24px;
    margin: 0 0 4px 35px;
}

.modes button {
    display: flex;
    align-items: center;
    justify-content: center;
    flex: none;
    height: 24px;
    margin-right: -1px;
    border: 1px solid var(--line);
}

.modes .center {
    width: 24px;
    margin-right: 7px;
}

.modes .center svg {
    width: 20px;
    height: 20px;
}

.modes .s {
    width: 25px;
    font-size: 21px;
    font-weight: bold;
}

.modes .sl {
    width: 26px;
    font-size: 14px;
    font-weight: bold;
}

.modes .drop {
    width: 12px;
}

.modes .oco {
    width: 25px;
    background: #dcdcf8;
    color: #f26a1b;
    font-size: 14px;
    font-weight: bold;
}

.oco svg {
    width: 12px;
    height: 20px;
}

.field.large {
    height: 20px;
    padding-left: 2px;
}

.large label {
    width: 20px;
    margin: 0 4px 0 24px;
}

.large .cancel + label {
    margin-left: 0;
}

.field.large input {
    width: 34px;
    height: 19px;
    font-size: 14px;
}

.large .spin {
    height: 19px;
}

.field .cancel {
    width: 24px;
    height: 24px;
    border: 1px solid var(--line);
}

.cancel svg {
    width: 20px;
    height: 20px;
    margin: 0 auto;
}

.trail {
    width: 19px;
    height: 19px;
    margin-left: 4px;
    border: 1px solid var(--line);
    font-size: 16px;
    font-weight: bold;
}

.position {
    display: grid;
    grid-template-columns: 36px 60px;
    grid-auto-rows: 17px;
    align-content: start;
    padding: 1px 0 0 1px;
}

.position span {
    margin-left: 19px;
}

.ladder-nav {
    display: flex;
    height: 20px;
}

.ladder-nav output,
.market {
    width: 64px;
    border: 1px solid var(--line);
    border-right: 0;
    background: #fff;
    font: 12px/18px "Open Sans", sans-serif;
    text-align: center;
}

.ladder-nav button {
    display: grid;
    place-items: center;
    border: 1px solid var(--line);
}

.ladder-nav .squares {
    width: 40px;
}

.squares svg {
    width: 16px;
    height: 16px;
}

.ladder-nav .scroll-up {
    width: 99px;
}

.ladder-nav .scroll-down {
    width: 133px;
}

.ladder-nav .scroll-up svg,
.ladder-nav .scroll-down svg {
    width: 18px;
    height: 9px;
}

.ladder-nav .market {
    display: flex;
    gap: 6px;
    align-items: center;
    padding-left: 1px;
    color: #008000;
}

.market i {
    width: 16px;
    height: 16px;
    border: 1px solid #064;
    border-radius: 4px;
    background: radial-gradient(circle at 35% 30%, #7f7, #0c0 50%, #070);
}

.ladder {
    width: 260px;
    border-spacing: 0;
    table-layout: fixed;
}

.ladder th {
    overflow: hidden;
    width: 27px;
    height: 20px;
    border-right: 1px solid var(--line);
    border-bottom: 1px solid var(--line);
    background: #f4f4f4;
    color: #222;
    font-weight: normal;
    white-space: nowrap;
}

.ladder th:first-child {
    width: 28px;
}

.ladder th:nth-child(2) {
    width: 36px;
}

.ladder th:nth-child(4) {
    width: 33px;
}

.ladder th:last-child {
    width: 52px;
    border-right: 0;
}

.ladder th.net {
    width: 84px;
    color: var(--down);
    font-size: 14px;
    font-weight: bold;
}

.ladder td {
    height: 18px;
    border-right: 1px solid var(--face);
    border-bottom: 1px solid var(--face);
    background: #e3e2dd;
    color: #222;
    font: 12px/17px "Open Sans", sans-serif;
    text-align: center;
}

.ladder .price,
.ladder .volume {
    background: var(--face);
}

.ladder .bid {
    background: #0078b0;
}

.ladder .offer {
    background: #ff6060;
}

.ladder .traded {
    background: var(--up);
}

.ladder .low {
    background: #fff;
    color: var(--down);
}

/* workspace tabs */

.tabs {
    display: flex;
    flex: none;
    height: 17px;
    font-size: 12px;
    line-height: 16px;
}

.tab-nav {
    display: flex;
}

.tab-nav button {
    display: grid;
    place-items: center;
    width: 17px;
    border: 1px solid #999;
}

.tab-nav svg {
    width: 8px;
    height: 8px;
}

.tabs a {
    position: relative;
    padding: 0 9px 0 14px;
    border-top: 1px solid #000;
    color: #000;
    text-decoration: none;
    white-space: nowrap;
}

.tabs a::before,
.tabs a::after {
    content: "";
    position: absolute;
    top: 0;
    bottom: 0;
    left: 3px;
    border-left: 1px solid #000;
    transform: skewX(17deg);
}

.tabs a::after {
    top: 8px;
    right: 0;
    left: auto;
    transform: skewX(-17deg);
}

.tabs .active {
    border-top-color: #fff;
    background: #fff;
    font-weight: bold;
}

.tabs .active::after {
    top: 0;
}

.tabs .rest {
    flex: 1;
    border-top: 1px solid #000;
}
```
FILE: app.js
```js
// Bars are listed oldest first as "color high,top,bottom,low" in plot units.
// "-" is a session without a bar. Plot units are scaled to the window on draw.
const charts = {
    'chart-daily': {
        name: '@NG - Daily',
        view: [23, 22, 1532, 1525],
        axisX: 1481, axisY: 1496,
        first: 34.500, step: 26.130, body: 9,
        last: 1375,
        bars: 'g133,137,371,375 r131,157,211,211 r70,214,237,259 r208,251,670,684 r604,641,647,741 r624,687,693,750 r698,704,824,830 g722,736,830,858 g676,730,741,870 r690,753,838,855 g738,813,855,872 g661,670,793,818 g593,604,682,690 r567,567,807,835 g564,624,793,830 g476,576,579,616 g402,428,582,596 r376,430,440,485 g316,328,445,479 r279,325,365,396 - r258,274,450,530 r442,462,510,604 r507,516,741,758 r681,727,798,804 g716,787,830,847 g724,775,793,826 g733,770,774,813 r770,778,1025,1028 r961,995,1023,1043 r964,992,1063,1095 r1058,1072,1175,1186 g1078,1095,1172,1190 g989,1041,1103,1189 r1018,1043,1160,1165 g898,952,1155,1155 g841,909,918,969 g810,827,904,911 r824,841,952,1015 r912,958,1106,1117 r1029,1075,1152,1172 r1123,1152,1283,1286 g1160,1183,1266,1275 r1155,1175,1411,1448 r1354,1388,1434,1485 g1371,1414,1460,1482 g1283,1303,1400,1431 g1237,1252,1300,1423 - r1237,1252,1360,1417 g1143,1177,1346,1366 r1165,1192,1303,1346 g1120,1266,1300,1340 r1234,1291,1371,1371',
        zigzag: '24,465 86,65 243,873 582,257 870,1192 1000,800 1184,1489',
        open: '1184,1489 1392,1114',
        prices: { 80: '4.500', 226: '4.400', 371: '4.300', 514: '4.200', 660: '4.100', 804: '4.000', 948: '3.900', 1093: '3.800', 1238: '3.700' },
        times: { 86: 'May*', 164: '6', 295: '13', 426: '20', 556: '27', 687: 'Jun*', 818: '10', 948: '17', 1079: '24', 1210: 'Jul*', 1340: '8' }
    },
    'chart-240': {
        name: '@NG - 240 min',
        view: [23, 42, 1532, 1448],
        axisX: 1481, axisY: 1439,
        first: 29.400, step: 13.070, body: 5,
        last: 1203,
        bars: 'g278,322,357,364 r324,324,357,395 g314,322,364,381 g292,319,323,368 g168,205,322,349 r197,208,295,416 g251,284,295,305 g254,276,278,281 g230,249,278,303 g178,184,254,277 g105,181,189,232 g85,165,184,196 g140,160,170,184 r157,176,192,195 r189,189,219,235 r157,219,270,362 r170,268,349,503 r295,349,376,443 r370,370,403,427 g378,386,405,432 g338,378,391,416 r305,381,392,427 r354,392,554,592 r503,552,619,700 g579,579,619,646 r608,627,714,810 g686,719,722,738 g640,660,722,733 g581,597,662,692 r570,597,652,733 r635,646,757,792 r740,754,787,787 g770,779,783,800 r770,779,783,805 g746,754,784,814 r719,752,906,992 r865,906,979,1030 r967,979,1005,1016 r998,1006,1019,1025 g971,1006,1014,1020 g868,873,1006,1022 r842,873,908,1013 g795,825,906,992 r784,827,835,839 r825,835,840,870 r816,841,860,868 r829,854,941,944 r842,935,1295,1330 g1233,1249,1295,1352 r1225,1249,1268,1268 g1222,1233,1268,1273 g1184,1184,1235,1244 r1173,1182,1200,1236 r1195,1195,1403,1430 g1190,1290,1403,1422 r1276,1290,1322,1322 g1228,1235,1376,1376 g1225,1228,1238,1252 r1203,1233,1265,1285 r1244,1260,1327,1341 r1203,1322,1352,1422 g1244,1276,1352,1379 g1225,1265,1279,1279 r1265,1268,1284,1292 r1266,1287,1295,1319 g1117,1184,1298,1298 g1046,1117,1184,1263 g1046,1079,1119,1152 g1016,1054,1076,1079 r1054,1054,1099,1108 r1054,1098,1127,1130 r1076,1122,1192,1206 r1154,1192,1252,1302 g954,989,1260,1276 g943,957,990,994 r952,971,987,995 r990,995,1060,1084 g1003,1043,1062,1068 r1027,1049,1071,1181 g1027,1027,1065,1100 r984,1025,1036,1063 r1022,1035,1052,1060 r1006,1027,1076,1076 g1008,1065,1079,1095 r1052,1060,1260,1279 g1138,1181,1260,1285 g1160,1168,1181,1190 g1081,1100,1152,1152 r1090,1103,1107,1119 r1095,1106,1138,1192 g998,1008,1135,1157 g843,906,1011,1062 g770,879,911,920 g865,871,881,885 g841,841,876,876 g819,819,846,862 r808,816,925,941 r871,922,1146,1150 g1030,1041,1144,1149 r1035,1038,1081,1084 g1064,1073,1079,1081 g1062,1068,1079,1138 g700,976,1071,1100 r852,981,1028,1117 g962,1025,1030,1077 r1019,1027,1073,1073 g1041,1046,1076,1111 r998,1044,1092,1125 r1076,1087,1119,1155 r935,1114,1200,1203',
        zigzag: '173,82 356,812 408,536 499,1030 591,781 722,1434 996,943 1140,1290 1231,762 1297,1150 1362,695',
        prices: { 93: '4.000', 233: '3.950', 376: '3.900', 517: '3.850', 658: '3.800', 800: '3.750', 942: '3.700', 1082: '3.650', 1225: '3.600', 1366: '3.550' },
        times: { 121: '6/19*', 199: '6/20*', 278: '6/21*', 356: '6/23*', 447: '6/25*', 526: '6/26*', 604: '6/27*', 683: '6/28*', 774: 'Jul*', 852: '7/2*', 931: '7/3*', 1009: '7/4*', 1088: '7/5*', 1166: '7/7*', 1258: '7/9*', 1336: '7/10*', 1414: '7/11*' }
    },
    'chart-60': {
        name: '@NG - 60 min',
        view: [30, 22, 2785, 1523],
        axisX: 2711, axisY: 1492,
        first: 37, step: 21, body: 5,
        last: 1275,
        bars: 'g915,915,980,995 g850,889,917,961 r806,904,932,947 g800,870,940,951 g850,861,878,892 g841,841,864,892 r841,841,897,940 r861,909,946,961 r889,929,951,1215 r944,949,981,1068 g938,958,995,1015 g870,895,947,1049 g850,861,907,932 r760,855,864,892 r870,870,878,946 g856,861,878,892 r850,870,892,931 r870,870,898,907 r890,903,912,912 r855,861,907,926 g807,821,898,898 r815,821,864,892 r875,875,972,972 r904,977,995,1021 g929,964,1005,1005 g815,821,947,1015 r822,829,951,1021 r914,938,1115,1129 r1106,1120,1197,1420 r1163,1200,1297,1320 r1289,1294,1414,1459 r1383,1411,1459,1485 g1294,1363,1459,1482 g1180,1214,1374,1414 r1194,1214,1232,1237 r1175,1219,1237,1257 g1195,1195,1243,1243 g1050,1058,1157,1157 g995,1032,1061,1075 g1020,1023,1041,1075 g1004,1018,1035,1063 r998,1004,1021,1021 r1018,1023,1049,1049 g1018,1032,1049,1061 r1018,1032,1069,1075 r1050,1058,1203,1248 g1086,1120,1203,1203 g998,1058,1115,1169 g924,949,1069,1069 g789,795,952,981 r785,801,818,912 g718,727,818,941 g368,448,736,736 r388,442,519,553 r436,510,573,593 g320,448,582,593 g222,235,450,450 r225,231,430,445 r402,436,505,505 g368,402,505,505 r393,393,439,450 r402,436,486,510 g482,482,486,492 g448,462,493,493 g448,448,465,473 r436,445,473,473 g416,416,473,473 g373,393,425,439 r388,388,439,459 g362,388,439,445 g362,362,396,439 r345,353,519,526 r510,516,573,607 r563,563,607,636 g563,604,607,647 r482,604,696,721 g549,610,696,721 r624,624,1103,1129 r984,1092,1129,1143 g1012,1018,1135,1149 r998,1023,1049,1089 g904,929,1049,1069 g889,889,927,950 r884,884,947,961 g895,929,941,941 g884,929,932,952 r938,938,986,995 g924,958,981,986 r938,949,981,981 g952,964,986,986 r964,964,972,986 r958,978,1041,1055 r1023,1032,1089,1123 g1018,1038,1089,1115 g944,958,1041,1115 r949,958,986,1026 g70,220,972,986 r111,225,519,593 r502,510,736,770 g510,536,750,750 r436,536,553,661 r502,550,641,690 r639,639,857,1065 g707,841,864,887 r795,835,898,918 g718,870,907,972 g841,855,872,918 r830,861,887,918 r855,884,912,918 g855,884,907,932 r884,904,966,966 g938,964,972,1055 g938,949,961,1001 r929,938,952,961 g889,904,961,981 g850,895,898,927 g821,870,892,952 r790,841,872,932 r841,841,1015,1089 r1004,1004,1035,1115 r1025,1032,1055,1095 r1038,1052,1080,1129 g978,1072,1095,1160 g915,992,1069,1157 g850,889,995,1149 r639,889,1272,1277',
        zigzag: '30,925 205,1220 310,755 687,1485 835,994 982,1249 1213,222 1318,516 1528,337 1675,1156 1780,877 1990,1120 2053,65 2179,1067 2494,790',
        open: '2494,790 2599,1162',
        levels: { 788: '3.680', 1161: '3.625' },
        prices: { 111: '3.780', 246: '3.760', 383: '3.740', 517: '3.720', 653: '3.700', 788: '3.680', 924: '3.660', 1058: '3.640', 1195: '3.620', 1330: '3.600', 1466: '' },
        times: { 226: '11:00', 415: '7/5*', 646: '11:00', 814: '7/7*', 919: '7/8*', 1150: '11:00', 1423: '7/9*', 1654: '11:00', 1927: '7/10*', 2158: '11:00', 2431: '7/11*', 2662: '11:00' }
    },
    'chart-15': {
        name: '@NG - 15 min',
        view: [33, 34, 2778, 1406],
        axisX: 2708, axisY: 1390,
        first: 40, step: 18, body: 5,
        last: 1389,
        bars: 'r1022,1038,1049,1062 g1022,1046,1062,1062 g1051,1052,1054,1054 r1052,1052,1071,1071 g1060,1060,1078,1078 r1068,1068,1078,1078 g1038,1068,1071,1071 g1046,1052,1062,1062 r1052,1052,1062,1071 r1060,1060,1071,1078 g1068,1068,1071,1071 g1060,1060,1062,1062 r1046,1068,1079,1079 r1076,1076,1106,1152 r1081,1119,1130,1135 g1098,1132,1135,1152 r1119,1127,1225,1225 g1179,1184,1225,1225 g1179,1192,1211,1216 r1141,1179,1187,1187 r1162,1184,1203,1225 g1184,1192,1211,1211 r1111,1179,1195,1203 g1133,1133,1187,1195 r1111,1133,1160,1181 r1119,1133,1144,1165 r1157,1157,1217,1217 g1030,1046,1211,1211 r1038,1046,1071,1100 g1068,1068,1079,1100 g1060,1076,1084,1106 g1076,1076,1079,1122 g1016,1022,1062,1079 g979,987,1025,1041 g73,111,981,981 r80,111,246,268 r124,249,268,281 r141,273,414,414 r378,406,541,576 r538,538,570,652 r550,560,597,635 r552,595,643,643 g581,603,652,652 r611,611,806,830 g603,684,819,819 g603,603,687,687 r560,603,687,695 g568,589,679,789 r490,589,643,665 g560,568,643,643 r543,568,679,687 g603,603,679,710 r595,603,716,754 g611,624,716,746 g568,581,627,695 r552,581,703,703 r700,700,952,968 r949,957,1011,1160 g949,1000,1011,1062 g906,935,998,1062 g795,854,946,946 r816,838,892,968 g778,854,892,930 r808,846,922,922 r876,914,968,1003 g868,906,973,973 r876,914,952,968 r906,949,981,989 r949,987,1003,1062 g787,862,1003,1054 r854,862,908,922 r900,900,952,960 g935,949,952,968 r944,949,990,998 g941,949,989,1003 g919,935,952,981 g906,935,946,965 r927,935,973,973 r970,971,992,998 g954,965,981,998 r935,965,998,1003 g935,971,990,1019 g935,935,960,960 g944,957,960,960 g965,965,968,979 g987,987,990,990 r979,1000,1049,1054 r971,1016,1025,1025 r1022,1038,1054,1054 r1022,1060,1114,1146 g1030,1068,1114,1122 g1060,1068,1071,1071 g1052,1052,1062,1062 g1030,1038,1049,1049 g1022,1038,1041,1054 r1030,1030,1041,1092 g1038,1038,1041,1041 r1022,1022,1041,1041 g1016,1016,1049,1049 r1030,1030,1041,1041 r1046,1046,1054,1071 g1046,1046,1049,1054 g1008,1008,1041,1041 g979,987,1011,1019 g944,965,981,981 r949,949,989,989 g927,949,981,1011 r930,971,981,981 g935,935,973,973 r903,927,1019,1019 r995,1008,1033,1041 g927,949,1041,1041 g868,876,922,922 r898,898,960,960 r927,957,973,1019 g927,949,973,998 r919,919,981,1011 r995,995,1049,1049 r1046,1046,1135,1187 g1098,1103,1135,1144 r1098,1098,1195,1217 g1149,1149,1187,1217 g1111,1127,1152,1187 g1111,1127,1135,1141 r1119,1127,1144,1181 r1127,1127,1173,1181 g1157,1162,1173,1195 g1127,1149,1160,1160 r1141,1149,1173,1181 r1160,1162,1181,1233 r1133,1171,1217,1233 g1179,1179,1211,1233 r1184,1192,1203,1241 g1184,1184,1203,1268 g1068,1089,1195,1265 r1068,1089,1173,1187 r1162,1162,1217,1225 g1081,1103,1217,1263 g1003,1076,1106,1106 g1022,1081,1084,1103 r1068,1081,1100,1130 r1090,1098,1217,1250 g1076,1081,1217,1225 g927,971,1084,1106 r935,971,981,1003 g703,803,981,981 r735,803,1387,1387',
        zigzag: '670,73 814,838 904,481 1066,1163 1156,774 1642,1149 2056,864 2452,1265 2524,1002 2578,1250',
        open: '2578,1250 2649,700',
        prices: { 124: '3.780', 273: '3.760', 420: '3.740', 568: '3.720', 714: '3.700', 862: '3.680', 1008: '3.660', 1157: '3.640', 1304: '3.620' },
        times: { 238: '7/10*', 454: '3:00', 670: '6:00', 886: '9:00', 1102: '12:00', 1318: '15:00', 1489: '18:00', 1696: '21:00', 1894: '7/11*', 2110: '3:00', 2326: '6:00', 2542: '9:00' }
    }
};

const quote = [['L=3.609', 1], ['-0.071', 1], ['-1.93%', 1], ['B=3.608'], ['A=3.609'], ['O=3.663', 1], ['Hi=3.702'], ['Lo=3.608'], ['V=47,721']];

function drawChart(id) {
    const c = charts[id];
    const el = document.getElementById(id);
    const w = el.clientWidth;
    const h = el.clientHeight;
    const [vx, vy, vw, vh] = c.view;
    const X = v => Math.floor((v - vx) * w / vw);
    const Y = v => Math.round((v - vy) * h / vh);
    const points = s => s.split(' ').map(p => {
        const [x, y] = p.split(',');
        return X(+x) + 0.5 + ',' + Y(+y);
    }).join(' ');
    const ax = X(c.axisX);
    const ay = Y(c.axisY);
    let wicks = '';
    let bodies = '';
    let out = '';

    c.bars.split(' ').forEach((bar, i) => {
        if (bar === '-') return;
        const [high, top, bottom, low] = bar.slice(1).split(',').map(v => Y(+v));
        const x = X(c.first + i * c.step);
        const fill = bar[0] === 'g' ? '#0f0' : '#f00';
        wicks += `<rect x="${x}" y="${high}" width="1" height="${low - high}" fill="#808080"/>`;
        bodies += `<rect x="${x - (c.body - 1) / 2}" y="${top}" width="${c.body}" height="${Math.max(1, bottom - top)}" fill="${fill}"/>`;
    });
    out += wicks + bodies;

    for (const y in c.levels) {
        out += `<rect x="0" y="${Y(y)}" width="${ax - 2}" height="1" fill="#fff"/>`;
        out += `<text x="1" y="${Y(y) - 4}">${c.levels[y]}</text>`;
    }
    out += `<polyline class="zigzag" points="${points(c.zigzag)}"/>`;
    if (c.open) out += `<polyline class="zigzag open" points="${points(c.open)}"/>`;

    let axis = `M${ax + 0.5} 0V${ay}M0 ${ay + 0.5}H${w}`;
    for (const y in c.prices) {
        axis += `M${ax} ${Y(y) + 0.5}h4`;
        out += `<text x="${ax + 4}" y="${Y(y) + 4}">${c.prices[y]}</text>`;
    }
    for (const x in c.times) {
        const major = c.times[x].endsWith('*');
        axis += `M${X(x) + 0.5} ${ay}v${major ? 6 : 3}`;
        out += `<text class="x" x="${X(x)}" y="${ay + 15}">${c.times[x].replace('*', '')}</text>`;
    }
    out += `<path class="axis" d="${axis}"/>`;
    out += `<rect x="${ax}" y="${Y(c.last) - 7}" width="${w - ax}" height="14" fill="#f00"/>`;
    out += `<text class="last" x="${ax + 5}" y="${Y(c.last) + 4}">3.609</text>`;

    el.innerHTML = `<svg>${out}</svg><div class="quote"><span class="symbol">${c.name}</span><span class="symbol">NYMEX</span>`
        + quote.map(([t, neg]) => `<span${neg ? ' class="neg"' : ''}>${t}</span>`).join('') + '</div>';
}

function drawAll() {
    Object.keys(charts).forEach(drawChart);
}

// Price ladder
const volumes = [651, 717, 657, 596, 599, 473, 455, 198, 134, 79, 182, 261, 347, 319, 135, 234, 264, 289, 246, 27, '', 16, 184, 90, 2, 103, 96, 162];
const offers = { 3618: 39, 3617: 28, 3616: 40, 3615: 22, 3614: 36, 3613: 24, 3612: 26, 3611: 34, 3610: 35, 3609: 5 };
const bids = { 3608: 16, 3607: 11, 3606: 66, 3605: 31, 3604: 43, 3603: 36, 3602: 53, 3601: 27, 3600: 58, 3599: 22 };

let rows = '';
for (let p = 3636; p >= 3590; p--) {
    const vol = volumes[3636 - p] ?? '';
    const start = 35 - Math.round((vol - 580) / 50);
    const bar = vol > 590 ? ` style="background: linear-gradient(90deg, transparent ${start}px, ${p === 3632 ? '#008000' : '#00ff00'} ${start}px)"` : '';
    const price = p === 3609 ? '3609 / 162' : p;
    const mark = p === 3609 ? ' traded' : p === 3608 ? ' low' : '';
    rows += `<tr><td></td><td${bids[p] ? ' class="bid"' : ''}>${bids[p] || ''}</td><td class="price${mark}">${price}</td>`
        + `<td${offers[p] ? ' class="offer"' : ''}>${offers[p] || ''}</td><td></td><td class="volume"${bar}>${vol}</td></tr>`;
}
document.getElementById('ladder-rows').innerHTML = rows;

drawAll();
window.addEventListener('resize', drawAll);
```
